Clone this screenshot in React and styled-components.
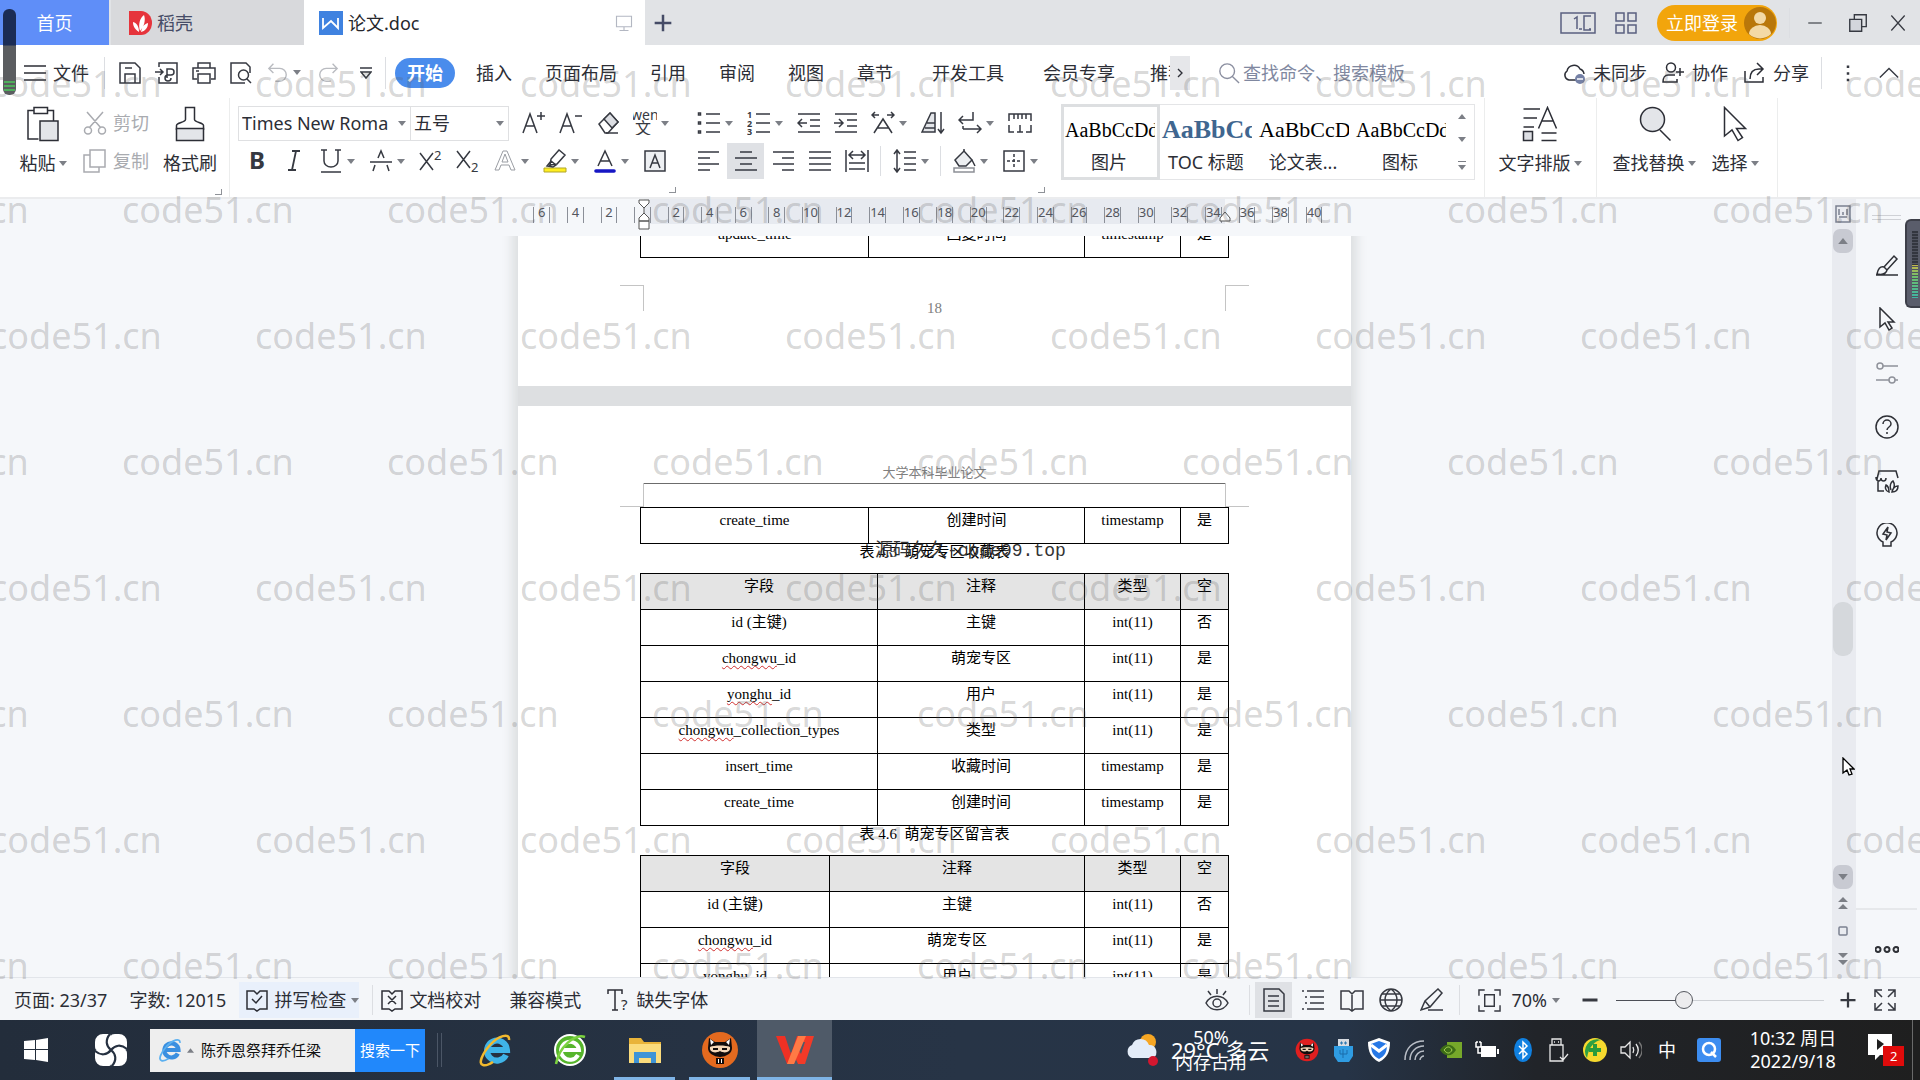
import React, { useState } from 'react';
import styled, { createGlobalStyle, css } from 'styled-components';

const GlobalStyle = createGlobalStyle`
  * {
    box-sizing: border-box;
  }

  body {
    margin: 0;
    color: #2c2e36;
    font-family: 'Noto Sans', 'Noto Sans CJK SC', sans-serif;
    font-size: 18px;
    line-height: 24px;
    overflow: hidden;
  }

  button, input, select {
    font: inherit;
    color: inherit;
    border: none;
    background: none;
    padding: 0;
    margin: 0;
    outline: none;
  }

  table {
    border-collapse: collapse;
  }
`;

/* ---------- icons ---------- */

const Svg = styled.svg`
  flex: none;
  display: block;
  fill: none;
  stroke: currentColor;
  stroke-width: ${(p) => p.$weight || 1.5};

  text {
    fill: currentColor;
    stroke: none;
  }
`;

const CaretSvg = styled.svg`
  flex: none;
  display: block;
  fill: #7c7f86;
`;

const glyphs = {
  menu: <path d="M1 5h22M1 12h22M1 19h22" />,
  save: <path d="M2 2h15l5 5v15H2zM7 22v-9h10v9M7 7h7" />,
  exportPdf: <path d="M4 6V2h18v20H4v-6M0 11h8M5 8l3 3-3 3M12 17v-9h4a3 3 0 010 6h-3a3 3 0 103 3" />,
  print: <path d="M6 7V2h12v5M5 18H1V7h22v11h-4M6 13h12v9H6zM4 10h3" />,
  preview: <path d="M16 22H2V2h15l4 4v6M14.500 9a5 5 0 100 10 5 5 0 000-10zM18 18l4 4" />,
  undo: <path d="M7 2L2 7l5 5M2 7h12a7 7 0 010 14H9" />,
  redo: <path d="M17 2l5 5-5 5M22 7H10a7 7 0 000 14h5" />,
  search: <path d="M10 2a8 8 0 100 16 8 8 0 000-16zM16 16l7 7" />,
  monitor: <path d="M2 3h20v14H2zM12 17v5M6 22h12" />,
  plus: <path d="M12 2v20M2 12h20" strokeWidth="3" />,
  minus: <path d="M2 12h20" strokeWidth="4" />,
  grid: <path d="M2 2h8v8H2zM14 2h8v8h-8zM2 14h8v8H2zM14 14h8v8h-8z" />,
  minimize: <path d="M3 12h18" />,
  restore: <><path d="M8 8V3h13v13h-5" /><path d="M3 8h13v13H3z" fill="#d3d6dc" /></>,
  close: <path d="M4 3l16 18M20 3L4 21" />,
  cloud: <><path d="M14 19H7a5 5 0 01-2-9 7 7 0 0113-2 6 6 0 014 5" /><circle cx="18" cy="18" r="5" fill="#7581a6" stroke="none" /><path d="M15 18h6" stroke="#fff" /></>,
  collab: <path d="M10 2a4 4 0 100 9 4 4 0 000-9zM14 14H7c-3 0-5 3-5 7h14v-3M15 11h8M19 7v8" />,
  share: <path d="M3 10v11h18v-5M15 2l6 6-6 6M21 8h-4c-6 0-9 4-9 10" />,
  more: <path d="M12 3v3M12 11v3M12 19v3" strokeWidth="3" />,
  up: <path d="M2 17l10-10 10 10" />,
  right: <path d="M9 6l6 6-6 6" strokeWidth="2" />,
  paste: <><path d="M9 22H2V3h4M15 3h4v7M6 1h9v4H6z" /><path d="M10 10h12v13H10z" fill="#e3e5e9" /></>,
  cut: <path d="M4 1l14 16M20 1L6 17M5 16a3.500 3.500 0 100 7 3.500 3.500 0 000-7zM19 16a3.500 3.500 0 100 7 3.500 3.500 0 000-7z" />,
  copy: <path d="M7 1h15v17H7zM7 6H1v17h15v-5" />,
  brush: <><path d="M3 16v-3c0-2 6-2 6-4V1h6v8c0 2 6 2 6 4v3" /><path d="M3 15h18v8H3z" fill="#e3e5e9" /></>,
  fontUp: <path d="M1 22L8 3l7 19M4 15h9M15 5h8M19 1v8" />,
  fontDown: <path d="M1 22L8 3l7 19M4 15h9M16 5h7" />,
  eraser: <><path d="M3 13L14 2l8 9-10 11H9z" /><path d="M8 8l6-6 8 9-6 6z" fill="#dcdee3" /><path d="M10 22h12" /></>,
  pinyin: <><text x="-2" y="9" fontSize="14">wén</text><text x="2" y="23" fontSize="16">文</text></>,
  bold: <text x="4" y="20" fontSize="24" fontWeight="700">B</text>,
  italic: <path d="M10 2h8M6 21h8M14 2L10 21" strokeWidth="1.8" />,
  underline: <path d="M5 1v11a7 6 0 0014 0V1M2 1h6M16 1h6M2 23h20" />,
  strike: <path d="M4 22l2-6M9 9l3-7 3 7M18 16l2 6M1 13h22" />,
  sup: <><path d="M1 4l13 17M14 4L1 21" /><text x="15" y="11" fontSize="13">2</text></>,
  sub: <><path d="M1 2l13 17M14 2L1 19" /><text x="15" y="23" fontSize="13">2</text></>,
  effect: <path d="M2 21L10 2h4l8 19h-4l-2-5H8l-2 5zM9 13h6l-3-8z" stroke="#9a9da3" strokeWidth="1" />,
  highlight: <><path d="M1 19h22v4H1z" fill="#ffee20" stroke="#b0a52a" strokeWidth="1" /><path d="M7 16l1-6 8-9 6 5-8 9zM4 17l4-5 5 4-3 2z" /></>,
  fontColor: <><path d="M5 17l7-15 7 15M7 12h10" /><path d="M3 22h18" stroke="#1616c4" strokeWidth="3.600" strokeLinecap="round" /></>,
  charBorder: <><path d="M2 2h20v20H2z" fill="#eef0f3" /><path d="M7 19l5-13 5 13M9 14h6" /></>,
  bullets: <path d="M9 3h14M9 12h14M9 21h14M1.500 2h2v2h-2zM1.500 11h2v2h-2zM1.500 20h2v2h-2z" />,
  numbers: <><path d="M9 3h14M9 12h14M9 21h14" /><text x="0" y="7" fontSize="9" fontWeight="700">1</text><text x="0" y="16" fontSize="9" fontWeight="700">2</text><text x="0" y="24" fontSize="9" fontWeight="700">3</text></>,
  outdent: <path d="M1 3h22M13 9h10M13 15h10M1 21h22M1 12h9M5 8l-4 4 4 4" />,
  indent: <path d="M1 3h22M13 9h10M13 15h10M1 21h22M0 12h9M5 8l4 4-4 4" />,
  charScale: <path d="M3 22L12 8l9 14M6 17h12M1 4h7M16 4h7M4 1L1 4l3 3M20 1l3 3-3 3" />,
  sort: <><path d="M1 21L10 2h4v19zM6 12h8M4 17h10" fill="#e3e5e9" /><path d="M20 1v20M17 18l3 4 3-4" /></>,
  wrap: <path d="M15 1v8H2M5 5L1 9l4 4M5 18h17M19 14l4 4-4 4M5 18v-3" />,
  tabRuler: <path d="M1 10V3h22v7M6 3v5M10 3v5M14 3v5M18 3v5M1 14v7h5M23 14v7h-5M12 14v7M9 21h6" />,
  alignLeft: <path d="M1 3h21M1 9h12M1 15h21M1 21h12" />,
  alignCenter: <path d="M6 3h12M1 9h22M6 15h12M1 21h22" />,
  alignRight: <path d="M2 3h21M11 9h12M2 15h21M11 21h12" />,
  justify: <path d="M1 3h22M1 9h22M1 15h22M1 21h22" />,
  distribute: <path d="M1 1v22M23 1v22M5 6h14M8 2L4 6l4 4M16 2l4 4-4 4M4 14h16M4 20h16" />,
  spacing: <path d="M4 2v20M1 5l3-4 3 4M1 19l3 4 3-4M11 3h12M11 9h12M11 15h12M11 21h12" />,
  shading: <><path d="M3 11L12 2l8 9-6 6H7z" fill="#eceef1" /><path d="M12 2V0M20 11l3 6" /><path d="M2 19h20v4H2z" stroke="#8d9096" /></>,
  borders: <><path d="M2 2h20v20H2z" /><path d="M12 5v14M5 12h14" strokeDasharray="3 2" /></>,
  layout: <><path d="M1 2h11M1 8h9M1 14h7M13 18h10M13 23h10" /><path d="M11 15l6-14 6 14M13 10h8" /><path d="M1 17h6v6H1z" fill="#dcdee3" /></>,
  find: <><circle cx="11" cy="9" r="8" fill="#e3e5e9" /><path d="M16 16l7 7" /></>,
  pointer: <path d="M5 1v19l5-4 4 7 3-2-4-6h6z" />,
  pen: <path d="M1 22h22M9 14l10-11 3 3-10 11zM9 14c-4-1-6 2-7 7 5 1 9 0 10-4" />,
  sliders: <path d="M8 5h15M1 19h13M5 2a3 3 0 100 6 3 3 0 000-6zM17 16a3 3 0 100 6 3 3 0 000-6zM20 19h3" />,
  help: <><circle cx="12" cy="12" r="11" /><path d="M8 9a4 4 0 118 0c0 3-4 3-4 6M12 17v2" /></>,
  shop: <path d="M2 10L4 2h17l2 7M1 8c0 5 5 5 5 1 0 4 5 4 5 0M3 12v10h6M14 23c-4-1-4-5-3-7 2 1 3 3 3 7zM16 21c-2-4 0-8 2-9 2 3 2 6-1 10M17 23c1-4 3-6 6-6 0 4-2 6-6 6z" />,
  bulb: <path d="M8 23v-4a10 10 0 118 0v4zM13 4l-5 7 4 1-1 5 5-7-4-1z" />,
  dots: <path d="M3 9a2.500 2.500 0 100 5 2.500 2.500 0 000-5zM12 9a2.500 2.500 0 100 5 2.500 2.500 0 000-5zM21 9a2.500 2.500 0 100 5 2.500 2.500 0 000-5z" strokeWidth="2" />,
  spell: <path d="M9 3H2v18h7l3 2 3-2h7V3h-7l-3 3zM7 11l4 4 6-7" />,
  proof: <path d="M9 3H2v18h7l3 2 3-2h7V3h-7l-3 3zM8 8l8 8M16 8l-8 8" />,
  missing: <><path d="M1 6V2h14v4M8 2v20M5 22h6" /><text x="14" y="22" fontSize="15">?</text></>,
  eye: <path d="M1 15c5-9 17-9 22 0-5 9-17 9-22 0zM12 11a4 4 0 100 8 4 4 0 000-8zM12 6V1M6 7L3 3M18 7l3-4" />,
  pageView: <path d="M2 1h15l5 5v17H2zM6 8h11M6 13h11M6 18h11" />,
  outline: <path d="M6 3h17M9 9h14M9 15h14M6 21h17M1 3h2M4 9h2M4 15h2M1 21h2" />,
  book: <path d="M9 3H1v18h8l3 2 3-2h8V3h-8l-3 3zM12 5v17" />,
  globe: <path d="M12 1a11 11 0 100 22 11 11 0 000-22zM1 12h22M12 1c-8 6-8 16 0 22M12 1c8 6 8 16 0 22M3 6h18M3 18h18" />,
  edit: <path d="M1 22l4-9L18 1l4 4L10 19zM5 13l5 6M8 22h15" />,
  fit: <path d="M1 7V1h6M17 1h6v6M23 17v6h-6M7 23H1v-6M7 6h10v12H7z" />,
  full: <path d="M2 9V2h7M2 2l7 7M15 2h7v7M22 2l-7 7M2 15v7h7M2 22l7-7M22 15v7h-7M22 22l-7-7" />,
};

const Icon = ({ name, size = 24 }) => (
  <Svg width={size} height={size} viewBox="0 0 24 24" $weight={size > 30 ? 1 : 1.5} aria-hidden="true">
    {glyphs[name]}
  </Svg>
);

const Caret = () => (
  <CaretSvg width="8" height="5" viewBox="0 0 8 5" aria-hidden="true">
    <path d="M0 0h8L4 5z" />
  </CaretSvg>
);

/* ---------- title bar ---------- */

const Window = styled.div`
  position: relative;
  display: flex;
  flex-direction: column;
  height: 100vh;
  overflow: hidden;
  background: #f5f7fa;
`;

const TitleBar = styled.header`
  display: flex;
  align-items: center;
  height: 45px;
  flex: none;
  background: #e1e3e6;
  color: #454b66;
`;

const HomeTab = styled.button`
  width: 109px;
  height: 100%;
  margin-right: 2px;
  background: #5f8ef8;
  color: #fff;
`;

const DocTab = styled.button`
  display: flex;
  align-items: center;
  gap: 5px;
  width: ${(p) => (p.$active ? 341 : 193)}px;
  height: 100%;
  padding: 0 12px 0 ${(p) => (p.$active ? 15 : 18)}px;
  background: ${(p) => (p.$active ? '#fff' : '#d8d9dc')};
  color: ${(p) => (p.$active ? '#26272c' : '#454b66')};

  > span {
    flex: 1;
    text-align: left;
  }
`;

const MonitorSlot = styled.i`
  color: #b3b7c2;
`;

const IconButton = styled.button`
  display: flex;
  align-items: center;
  justify-content: center;
  flex: none;
  width: ${(p) => p.$w || 37}px;
  height: 36px;
  color: ${(p) => p.$color || '#363941'};
  background: ${(p) => (p.$on ? '#dfe1e5' : 'none')};
  gap: 4px;
`;

const WindowControls = styled.div`
  display: flex;
  align-items: center;
  margin-left: auto;
`;

const LoginButton = styled.button`
  display: flex;
  align-items: center;
  justify-content: space-between;
  width: 120px;
  height: 36px;
  margin: 0 12px 0 8px;
  padding: 0 1px 0 9px;
  border-radius: 18px;
  background: #f2a50c;
  color: #fff;
`;

const Divider = styled.i`
  flex: none;
  width: 1px;
  height: ${(p) => p.$h || 30}px;
  margin: 0 ${(p) => p.$gap || 0}px;
  background: #dcdee2;
`;

/* ---------- menu row ---------- */

const MenuBar = styled.nav`
  display: flex;
  align-items: center;
  flex: none;
  height: 53px;
  padding: 2px 9px 0 20px;
  background: #fff;
`;

const FileButton = styled.button`
  display: flex;
  align-items: center;
  gap: 6px;
  margin-right: 15px;
  padding-left: 3px;
`;

const QuickAccess = styled.div`
  display: flex;
  align-items: center;
  padding-left: 6px;
`;

const MenuTab = styled.button`
  flex: none;
  padding: 0 16px 0 17px;
  margin: 0 ${(p) => (p.$wide ? 6 : 0)}px;
  white-space: nowrap;

  ${(p) => p.$active && css`
    height: 30px;
    padding: 0 12px;
    margin: 0 4px 0 9px;
    border-radius: 15px;
    background: #4a8cec;
    color: #fff;
    font-weight: 700;
  `}
`;

const CutTab = styled.button`
  width: 20px;
  padding-left: 0;
  margin-left: 19px;
  overflow: hidden;
  white-space: nowrap;
  text-align: left;
`;

const ScrollTabs = styled.button`
  display: flex;
  align-items: center;
  justify-content: center;
  width: 20px;
  height: 34px;
  background: #e6e7ea;
`;

const CommandSearch = styled.label`
  display: flex;
  align-items: center;
  flex: 1;
  gap: 3px;
  margin-left: 28px;
  color: #8b8fa0;

  input {
    width: 200px;
  }

  input::placeholder {
    color: #8088a0;
    opacity: 1;
  }
`;

const ActionButton = styled.button`
  display: flex;
  align-items: center;
  gap: 7px;
  margin-right: ${(p) => p.$end || 14}px;
  white-space: nowrap;
`;

/* ---------- ribbon ---------- */

const Ribbon = styled.section`
  display: flex;
  flex: none;
  height: 101px;
  background: #fff;
  border-bottom: 2px solid #ebecee;
`;

const Group = styled.div`
  display: flex;
  flex-direction: column;
  flex: none;
  padding: 7px ${(p) => p.$right || 7}px 0 ${(p) => p.$left || 8}px;
  border-right: ${(p) => (p.$plain ? 'none' : '1px solid #eceded')};
`;

const GroupBody = styled.div`
  display: flex;
  gap: 9px;
`;

const Rows = styled.div`
  display: flex;
  flex-direction: column;
  gap: 2px;
`;

const Row = styled.div`
  display: flex;
  align-items: center;
  height: 36px;
`;

const Corner = styled.i`
  align-self: flex-end;
  width: 7px;
  height: 6px;
  margin-top: 8px;
  border: solid #8f9298;
  border-width: 0 1px 1px 0;
`;

const BigTool = styled.button`
  display: flex;
  flex-direction: column;
  align-items: center;
  justify-content: space-between;
  width: ${(p) => p.$w}px;
  height: 76px;
  padding-top: 1px;

  > span {
    display: flex;
    align-items: center;
    gap: 3px;
    height: 36px;
    white-space: nowrap;
  }
`;

const SmallTool = styled.button`
  display: flex;
  align-items: center;
  gap: 6px;
  height: 36px;
  color: #a9abb0;
`;

const FontBoxes = styled.div`
  display: flex;
  width: 271px;
  height: 35px;
  margin-right: 6px;
  border: 1px solid #dfe0e2;
`;

const SelectBox = styled.label`
  display: flex;
  align-items: center;
  gap: 9px;
  width: ${(p) => p.$w}px;
  padding: 0 4px 0 3px;
  border-left: ${(p) => (p.$split ? '1px solid #dfe0e2' : 'none')};

  select {
    flex: 1;
    min-width: 0;
    appearance: none;
    text-overflow: clip;
    overflow: hidden;
  }
`;

const Gallery = styled.div`
  display: flex;
  height: 76px;
  margin-top: -1px;
  border: 1px solid #e4e5e7;
`;

const StyleCard = styled.button`
  display: flex;
  flex-direction: column;
  width: 97px;
  height: 74px;
  padding: 0 4px 0 1px;
  outline: ${(p) => (p.$on ? '3px solid #dddfe1' : 'none')};
  outline-offset: -2px;

  > b {
    width: 100%;
    height: 36px;
    padding-left: 2px;
    margin-top: 7px;
    overflow: hidden;
    color: ${(p) => (p.$title ? '#40668f' : '#000')};
    font-family: 'Liberation Serif', serif;
    font-size: ${(p) => p.$size}px;
    font-weight: ${(p) => (p.$title ? 700 : 400)};
    line-height: 36px;
    text-align: left;
    white-space: nowrap;
  }

  > span {
    width: 100%;
    line-height: 28px;
    text-align: center;
  }
`;

const GalleryScroll = styled.div`
  display: flex;
  flex-direction: column;
  align-items: center;
  justify-content: space-around;
  width: 24px;
`;

/* ---------- document ---------- */

const Workspace = styled.main`
  display: flex;
  flex: 1;
  min-height: 0;
`;

const Editor = styled.div`
  display: flex;
  flex-direction: column;
  align-items: center;
  flex: 1;
  min-width: 0;
  padding-left: 37px;
`;

const Ruler = styled.div`
  position: relative;
  flex: none;
  width: 833px;
  height: 37px;
  padding: 0 20px 0 7px;
`;

const RulerScale = styled.div`
  display: flex;
  align-items: flex-start;
  height: 25px;
  padding-top: 8px;
  background: linear-gradient(90deg, transparent 119px, #e7eaf0 119px, #e7eaf0 700px, transparent 700px);
`;

const RulerMark = styled.div`
  display: flex;
  justify-content: center;
  flex: 1;
  min-width: 0;

  span {
    width: 50%;
    display: flex;
    justify-content: center;
    height: 16px;
    border: solid #8b8f98;
    border-width: 0 1px;
    color: #53565e;
    font-size: 13px;
    line-height: 10px;
  }
`;

const IndentMarker = styled.svg`
  position: absolute;
  top: 0;
  left: ${(p) => p.$left}px;
  fill: #fff;
  stroke: #555;
`;

const Viewport = styled.div`
  flex: 1;
  min-height: 0;
  overflow: hidden;
  padding: 0 20px;
`;

const Sheets = styled.div`
  display: flex;
  flex-direction: column;
  gap: 20px;
  margin-top: -15px;
  background: #dddfe1;
  box-shadow: 0 0 10px 6px #dddfe1;
`;

const Sheet = styled.article`
  position: relative;
  display: flex;
  flex-direction: column;
  align-items: center;
  width: 833px;
  padding-top: ${(p) => p.$top}px;
  padding-bottom: ${(p) => p.$bottom}px;
  background: #fff;
  color: #000;
  font-family: 'Liberation Serif', 'Noto Sans CJK SC', serif;
  font-size: 15px;
`;

const Margins = styled.div`
  display: flex;
  color: #808080;
`;

const CropMark = styled.i`
  width: 24px;
  height: ${(p) => (p.$foot ? 26 : 24)}px;
  border: 0 solid #c4c4c4;
  border-top-width: ${(p) => (p.$foot ? 1 : 0)}px;
  border-bottom-width: ${(p) => (p.$foot ? 0 : 1)}px;
  border-${(p) => (p.$side === 'left' ? 'right' : 'left')}-width: 1px;
`;

const FooterText = styled.div`
  width: 581px;
  padding-top: 13px;
  line-height: 20px;
  text-align: center;
`;

const HeaderText = styled.div`
  font-size: 13px;
  line-height: 20px;
  color: #808080;
`;

const HeaderRule = styled.div`
  width: 581px;
  border-top: 1px solid #6c6c6c;
`;

const DataTable = styled.table`
  width: 589px;
  table-layout: fixed;
  margin-bottom: ${(p) => p.$gap || 0}px;

  th, td {
    height: 36px;
    padding: 0;
    border: 1px solid #000;
    font-weight: 400;
    line-height: 25px;
    text-align: center;
    vertical-align: top;
  }

  th {
    background: #e4e4e4;
  }

  u {
    text-decoration: underline wavy #d03030 1px;
    text-underline-offset: 2px;
    text-decoration-skip-ink: none;
  }
`;

const TableTitle = styled.p`
  height: 29px;
  margin: 0;
  line-height: 16px;
  white-space: pre;
`;

const SiteStamp = styled.span`
  position: absolute;
  top: 135px;
  left: 357px;
  color: #333;
  font: 18px/20px 'Liberation Mono', 'Noto Sans CJK SC', monospace;
  white-space: nowrap;
`;

const ScrollRail = styled.aside`
  display: flex;
  flex-direction: column;
  align-items: center;
  width: 24px;
  padding: 6px 3px 4px 0;
  background: #e9ebf0;
  color: #7b8190;

  > svg {
    margin-bottom: 6px;
  }
`;

const RailButton = styled.button`
  display: flex;
  align-items: center;
  justify-content: center;
  flex: none;
  width: 20px;
  height: 24px;
  margin: ${(p) => (p.$solid ? '0' : '2px')} 0;
  border-radius: 7px;
  background: ${(p) => (p.$solid ? '#c8cad2' : 'none')};
`;

const RailTrack = styled.div`
  flex: 1;
  display: flex;
  flex-direction: column;
  width: 20px;

  &::before {
    content: '';
    flex: 350;
  }

  &::after {
    content: '';
    flex: 210;
  }

  i {
    height: 54px;
    border-radius: 9px;
    background: #d5d8dc;
  }
`;

const SideBar = styled.aside`
  display: flex;
  flex-direction: column;
  align-items: center;
  width: 64px;
  padding: 16px 3px 9px 0;

  > hr {
    width: 100%;
    margin: auto 0 22px;
    border: none;
    border-top: 2px solid #e6e8eb;
  }
`;

const DragHandle = styled.i`
  width: 29px;
  height: 5px;
  margin-bottom: 18px;
  border: solid #cfd1d6;
  border-width: 1px 0;
`;

const SideButton = styled.button`
  display: flex;
  align-items: center;
  justify-content: center;
  width: 40px;
  height: 54px;
  color: ${(p) => (p.$soft ? '#8f929a' : '#2e3036')};

  &:last-child {
    height: 36px;
  }
`;

/* ---------- status bar ---------- */

const StatusBar = styled.footer`
  display: flex;
  align-items: center;
  flex: none;
  height: 43px;
  padding: 2px 11px 0 14px;
  border-top: 1px solid #e2e5ea;
  background: #f4f6f9;
  white-space: nowrap;
`;

const StatusItem = styled.button`
  display: flex;
  align-items: center;
  flex: none;
  gap: 5px;
  height: 36px;
  margin-right: ${(p) => p.$end || 13}px;
  padding-left: ${(p) => (p.$on ? 6 : 0)}px;
  background: ${(p) => (p.$on ? '#e9f0fb' : 'none')};
`;

const StatusRight = styled.div`
  display: flex;
  align-items: center;
  margin-left: auto;
`;

const ZoomSlider = styled.input`
  appearance: none;
  width: 208px;
  height: 20px;
  margin: 0 12px 0 14px;
  background: linear-gradient(90deg, #4c4f57 32%, #cdd0d5 32%) center / 100% 1px no-repeat;

  &::-webkit-slider-thumb {
    appearance: none;
    width: 18px;
    height: 18px;
    border: 1px solid #55585f;
    border-radius: 50%;
    background: #ececee;
  }
`;

/* ---------- task bar ---------- */

const TaskBar = styled.footer`
  display: flex;
  align-items: center;
  flex: none;
  height: 60px;
  background: linear-gradient(90deg, #232d3b, #273446 50%, #263447 70%, #212429 80%, #1f1f1f);
  color: #fff;
`;

const TaskButton = styled.button`
  display: flex;
  align-items: center;
  justify-content: center;
  flex: none;
  width: ${(p) => p.$w || 75}px;
  height: 60px;
  background: ${(p) => (p.$active ? '#4f5a68' : 'none')};
`;

const AppMark = styled.span`
  display: flex;
  align-items: center;
  justify-content: center;
  width: ${(p) => (p.$full ? 75 : 61)}px;
  height: 60px;
  padding-top: 3px;
  border-bottom: 3px solid ${(p) => (p.$open ? '#7fb4e6' : 'transparent')};
`;

const TaskSearch = styled.form`
  display: flex;
  width: 275px;
  height: 43px;
  background: #eee;
  color: #111;
  font-size: 15px;

  label {
    display: flex;
    align-items: center;
    flex: 1;
    gap: 5px;
    min-width: 0;
    padding-left: 8px;
  }

  input {
    flex: 1;
    min-width: 0;
    padding-left: 2px;
  }

  button {
    width: 70px;
    background: #2188fb;
    color: #fff;
  }
`;

const Grip = styled.i`
  width: 5px;
  height: 34px;
  margin: 0 15px 0 12px;
  border: solid #4b5666;
  border-width: 0 1px;
`;

const Weather = styled.div`
  display: flex;
  align-items: center;
  gap: 12px;
  margin: 0 17px 0 auto;
`;

const WeatherText = styled.div`
  display: grid;
  align-items: center;
  width: 101px;
  white-space: nowrap;

  > * {
    grid-area: 1 / 1;
  }

  strong {
    font-size: 22px;
    font-weight: 400;
  }

  span {
    width: 80px;
    line-height: 25px;
    text-align: center;
  }
`;

const Clock = styled.button`
  width: 120px;
  margin-right: 7px;
  line-height: 23px;
`;

const ShowDesktop = styled.button`
  width: 8px;
  height: 60px;
  border-left: 1px solid #6a6a6a;
`;

/* ---------- things floating over the window ---------- */

const Watermark = styled.div`
  position: absolute;
  inset: 21px 0 0;
  overflow: hidden;
  pointer-events: none;
  color: rgba(90, 90, 90, 0.24);
  font-size: 36px;
`;

const WatermarkRow = styled.div`
  display: flex;
  height: 126px;
  line-height: 126px;
  margin-left: ${(p) => (p.$shift ? -143 : -10)}px;

  span {
    flex: 0 0 265px;
  }
`;

const LevelMeter = styled.div`
  position: absolute;
  top: 9px;
  left: 3px;
  width: 13px;
  height: 86px;
  border-radius: 6px;
  background:
    repeating-linear-gradient(#4fae5c 0 2px, transparent 2px 4px) 1px 72px / 11px 12px no-repeat,
    linear-gradient(#1b2c55 36px, #5b5d60 37px);
`;

const SystemGadget = styled.div`
  position: absolute;
  top: 219px;
  right: 0;
  width: 15px;
  height: 89px;
  padding: 10px 2px 8px 5px;
  border: 2px solid #3d3f49;
  border-right: none;
  border-radius: 6px 0 0 6px;
  background: #5a5d6b;

  i {
    display: block;
    width: 6px;
    height: 100%;
    background:
      repeating-linear-gradient(transparent 0 2px, #50535f 2px 3px),
      linear-gradient(#33363f 34px, #c5b84a 34px, #6dbf6d 46px, #3fb5a4 100%);
  }
`;

const Cursor = styled.svg`
  position: absolute;
  top: 757px;
  right: 65px;
`;

const menuTabs = ['插入', '页面布局', '引用', '审阅', '视图', '章节', '开发工具', '会员专享'];

const fontTools = [['bold'], ['italic'], ['underline', 1], ['strike', 1], ['sup'], ['sub'], ['effect', 1], ['highlight', 1], ['fontColor', 1], ['charBorder']];
const listTools = [['bullets', 1], ['numbers', 1], ['outdent'], ['indent'], ['charScale', 1], ['sort'], ['wrap', 1], ['tabRuler']];
const alignTools = [['alignLeft'], ['alignCenter'], ['alignRight'], ['justify'], ['distribute']];

const rulerNumbers = ['6', '4', '2', ''].concat(Array.from({ length: 20 }, (_, i) => String(i * 2 + 2)));

const heads = ['字段', '注释', '类型', '空'];

const collectRows = [
  ['id (主键)', '主键', 'int(11)', '否'],
  ['chongwu|_id', '萌宠专区', 'int(11)', '是'],
  ['yonghu|_id', '用户', 'int(11)', '是'],
  ['chongwu|_collection_types', '类型', 'int(11)', '是'],
  ['insert_time', '收藏时间', 'timestamp', '是'],
  ['create_time', '创建时间', 'timestamp', '是'],
];

const messageRows = [
  ['id (主键)', '主键', 'int(11)', '否'],
  ['chongwu|_id', '萌宠专区', 'int(11)', '是'],
  ['yonghu|_id', '用户', 'int(11)', '是'],
];

// "word|rest" puts the spelling squiggle under the part before the bar
const FieldName = ({ value }) => {
  const [word, rest] = value.split('|');
  return rest ? <><u>{word}</u>{rest}</> : value;
};

const FieldTable = ({ cols, head, rows, gap }) => (
  <DataTable $gap={gap}>
    <colgroup>
      {cols.map((w, i) => <col key={i} width={w} />)}
    </colgroup>
    {head && (
      <thead>
        <tr>{heads.map((h) => <th key={h} scope="col">{h}</th>)}</tr>
      </thead>
    )}
    <tbody>
      {rows.map((row) => (
        <tr key={row[0]}>
          {row.map((cell, i) => <td key={i}><FieldName value={cell} /></td>)}
        </tr>
      ))}
    </tbody>
  </DataTable>
);

const Tools = ({ items, active, onPick }) => items.map(([name, caret]) => (
  <IconButton
    key={name}
    $w={caret ? 50 : 37}
    $on={active === name}
    aria-label={name}
    onClick={() => onPick && onPick(name)}
  >
    <Icon name={name} />
    {caret && <Caret />}
  </IconButton>
));

const Margin = ({ foot, children }) => (
  <Margins>
    <CropMark $side="left" $foot={foot} />
    {children}
    <CropMark $side="right" $foot={foot} />
  </Margins>
);

/* ---------- coloured logos ---------- */

const DocerLogo = () => (
  <svg width="23" height="24" viewBox="0 0 23 24">
    <path d="M0 0h12a11 12 0 010 24H0z" fill="#e6343c" />
    <path d="M10 21C5 18 4 14 4 11c4 1 6 5 6 10zM11 20c-2-7 0-13 4-16 2 5 0 12-4 16zM12 21c1-5 3-8 7-9 0 5-3 8-7 9z" fill="#fff" />
  </svg>
);

const WriterLogo = () => (
  <svg width="24" height="24" viewBox="0 0 24 24">
    <path d="M0 0h24v24H0z" fill="#3f82e0" />
    <path d="M4 7v10l8-7 7 7V7" fill="none" stroke="#fff" strokeWidth="1.800" />
  </svg>
);

const IeLogo = ({ size = 34, color = '#3fb4e8', ring = '#f2b92e' }) => (
  <svg width={size} height={size} viewBox="0 0 34 34" fill="none">
    <path d="M28 22a10 10 0 11 1-5H10" stroke={color} strokeWidth="6" />
    <path d="M31 7c1-8-11-4-19 5C4 21 0 31 5 32c3 1 7-1 10-3" stroke={ring} strokeWidth="2.500" />
  </svg>
);

const GreenLogo = () => (
  <svg width="34" height="34" viewBox="0 0 34 34" fill="none">
    <circle cx="17" cy="17" r="15" fill="#56b52c" stroke="#fff" strokeWidth="2" />
    <path d="M25 22a9 9 0 11 1-5H10" stroke="#fff" strokeWidth="4" />
    <path d="M32 4C22 0 6 14 3 31" stroke="#7cd33f" strokeWidth="2.500" />
  </svg>
);

const FolderLogo = () => (
  <svg width="34" height="30" viewBox="0 0 34 30">
    <path d="M1 3h12l3 4h17v20H1z" fill="#e9b43a" />
    <path d="M1 9h32v19H1z" fill="#fbdc7c" />
    <path d="M6 17h22v11h-5v-5H11v5H6z" fill="#3f94d6" />
  </svg>
);

const NinjaLogo = ({ size = 38, body = '#e46a1f' }) => (
  <svg width={size} height={size} viewBox="0 0 38 38">
    <circle cx="19" cy="19" r="18" fill={body} />
    <path d="M8 7l6 4h10l6-4 1 10a12 9 0 01-24 0z" fill="#120d0c" />
    <path d="M9 8l4 3-3 3zM29 8l-4 3 3 3z" fill="#fff" />
    <path d="M9 16c4-2 16-2 20 0 1 5-5 7-10 4-5 3-11 1-10-4z" fill="#f4d8b8" />
    <path d="M12 17h5v2h-5zM21 17h5v2h-5zM15 27h8v6h-8z" fill="#120d0c" />
    <path d="M17 28h1v4h-1zM20 28h1v4h-1z" fill="#fff" />
  </svg>
);

const WpsLogo = () => (
  <svg width="38" height="28" viewBox="0 0 38 28">
    <path d="M0 0h9l6 18 6-18h8L18 28h-7z" fill="#ee3124" />
    <path d="M25 0h13l-9 28h-7l-4-9 3-8 4 7 4-12h-5z" fill="#f23a28" />
    <path d="M22 0h8L18 28h-7z" fill="#ff7a45" />
  </svg>
);

const PinwheelLogo = () => (
  <svg width="34" height="34" viewBox="0 0 34 34">
    <path d="M9 1h5q3 0 3 2 0-2 4-2h4a8 8 0 018 8v4q0 4-2 4 2 0 2 4v4a8 8 0 01-8 8h-4q-4 0-4-2 0 2-3 2H9a8 8 0 01-8-8v-4q0-4 2-4-2 0-2-4V9a8 8 0 018-8z" fill="#fff" />
    <path d="M17 17c-5-4-6-10-1-16M17 17c4-5 10-6 16-1M17 17c5 4 6 10 1 16M17 17c-4 5-10 6-16 1" fill="none" stroke="#263141" strokeWidth="2.200" />
  </svg>
);

const WindowsLogo = () => (
  <svg width="24" height="24" viewBox="0 0 24 24" fill="#fff">
    <path d="M0 3l11-1v9H0zM12 2l12-2v11H12zM0 12h11v10L0 21zM12 12h12v12l-12-2z" />
  </svg>
);

const WeatherLogo = () => (
  <svg width="34" height="34" viewBox="0 0 34 34">
    <circle cx="23" cy="9" r="8" fill="#f6a623" />
    <path d="M7 25a7 7 0 010-13 9 9 0 0117 0 7 7 0 014 13z" fill="#e3ecf8" />
    <circle cx="28" cy="28" r="5" fill="#d3172f" />
  </svg>
);

const trayIcons = [
  ['安全助手', <NinjaLogo size={24} body="#e01f1f" />],
  ['U盘', <svg width="22" height="24" viewBox="0 0 22 24"><path d="M6 1h11v8H6z" fill="#d7dbe0" /><path d="M2 8h19v10l-4 6H6l-4-6z" fill="#2f9ce2" /><path d="M9 4h1v2H9zM13 4h1v2h-1zM8 12v4h7v-4M11 11v9" fill="none" stroke="#1a6dab" /></svg>],
  ['电脑管家', <svg width="24" height="24" viewBox="0 0 24 24"><path d="M12 0l11 4c0 10-3 16-11 20C4 20 1 14 1 4z" fill="#fff" /><path d="M12 3l8 3c0 8-2 12-8 15-6-3-8-7-8-15z" fill="#2678e6" /><path d="M4 7l8 6 8-6" fill="none" stroke="#fff" strokeWidth="3" /></svg>],
  ['网络', <svg width="22" height="22" viewBox="0 0 22 22" fill="none" stroke="#b9bec6" strokeWidth="1.500"><path d="M1 21C1 9 9 2 20 2M6 21c0-8 6-14 14-14M11 21c0-5 4-9 9-9M16 21c0-2 2-4 4-4" /></svg>],
  ['显卡', <svg width="22" height="18" viewBox="0 0 22 18"><path d="M7 1h15v16H7z" fill="#76a82a" /><path d="M0 9c4-7 12-7 16 0-4 7-12 7-16 0z" fill="#3d6d16" /><path d="M4 9c3-4 6-4 8 0-2 4-5 4-8 0z" fill="none" stroke="#a6d452" /></svg>],
  ['电池', <svg width="24" height="18" viewBox="0 0 24 18"><path d="M6 5h15v11H6zM22 8h2v5h-2z" fill="#fff" /><path d="M1 1v5h5V1M3 6v6h3M2 0v2M5 0v2" fill="none" stroke="#fff" strokeWidth="1.500" /></svg>],
  ['蓝牙', <svg width="18" height="24" viewBox="0 0 18 24"><ellipse cx="9" cy="12" rx="9" ry="12" fill="#1080e0" /><path d="M5 8l8 8-4 4V4l4 4-8 8" fill="none" stroke="#fff" strokeWidth="1.500" /></svg>],
  ['弹出硬件', <svg width="20" height="24" viewBox="0 0 20 24" fill="none" stroke="#e8e8e8" strokeWidth="1.300"><path d="M3 7V1h9v6M1 7h13v16H1zM5 4h1M9 4h1M11 19l3 3 5-6" /></svg>],
  ['杀毒', <svg width="24" height="24" viewBox="0 0 24 24"><circle cx="12" cy="12" r="12" fill="#f6d92e" /><path d="M4 20A12 12 0 0118 2c-6 1-12 6-14 18z" fill="#2ea043" /><path d="M12 6v12M6 12h12" stroke="#2a9b3c" strokeWidth="4" /></svg>],
  ['音量', <svg width="22" height="20" viewBox="0 0 22 20" fill="none" stroke="#e8e8e8" strokeWidth="1.300"><path d="M1 7h4l5-5v16l-5-5H1zM13 7c1 2 1 4 0 6M16 4c3 4 3 8 0 12" /><path d="M19 2c4 5 4 11 0 16" stroke="#777" /></svg>],
];

const ScrollControls = () => (
  <>
    <RailButton $solid aria-label="向上滚动">
      <CaretSvg width="10" height="6" viewBox="0 0 8 5"><path d="M0 5h8L4 0z" /></CaretSvg>
    </RailButton>
    <RailTrack><i /></RailTrack>
    <RailButton $solid aria-label="向下滚动">
      <CaretSvg width="10" height="6" viewBox="0 0 8 5"><path d="M0 0h8L4 5z" /></CaretSvg>
    </RailButton>
    <RailButton aria-label="上一页">
      <CaretSvg width="10" height="12" viewBox="0 0 10 12"><path d="M0 5h10L5 0zM0 12h10L5 7z" /></CaretSvg>
    </RailButton>
    <RailButton aria-label="选择浏览对象">
      <Svg width="10" height="10" viewBox="0 0 10 10"><rect x="1" y="1" width="8" height="8" rx="1" /></Svg>
    </RailButton>
    <RailButton aria-label="下一页">
      <CaretSvg width="10" height="12" viewBox="0 0 10 12"><path d="M0 0h10L5 5zM0 7h10L5 12z" /></CaretSvg>
    </RailButton>
  </>
);

const App = () => {
  const [align, setAlign] = useState('alignCenter');
  const [zoom, setZoom] = useState(31);

  return (
    <Window>
      <GlobalStyle />

      <TitleBar>
        <HomeTab><span>首页</span></HomeTab>
        <DocTab><DocerLogo /><span>稻壳</span></DocTab>
        <DocTab $active>
          <WriterLogo />
          <span>论文.doc</span>
          <MonitorSlot><Icon name="monitor" size={18} /></MonitorSlot>
        </DocTab>
        <IconButton aria-label="新建" $w={35} $color="#454b66"><Icon name="plus" size={20} /></IconButton>
        <WindowControls>
          <IconButton $w={50} $color="#5a6080" aria-label="窗口">
            <Svg width="36" height="22" viewBox="0 0 36 22">
              <path d="M1 1h34v20H1zM14 7l3-2v12M22 17h-3M31 4h-7v14h7M29 17h2" />
            </Svg>
          </IconButton>
          <IconButton $w={46} $color="#5a6080" aria-label="应用"><Icon name="grid" /></IconButton>
          <LoginButton>
            <span>立即登录</span>
            <svg width="32" height="32" viewBox="0 0 32 32">
              <circle cx="16" cy="16" r="16" fill="#b9770a" />
              <circle cx="16" cy="11" r="6" fill="#f3d9a6" />
              <path d="M5 27a11 9 0 0122 0 16 16 0 01-22 0z" fill="#f3d9a6" />
            </svg>
          </LoginButton>
          <Divider />
          <IconButton $w={50} aria-label="最小化"><Icon name="minimize" size={18} /></IconButton>
          <IconButton $w={36} aria-label="还原"><Icon name="restore" size={22} /></IconButton>
          <IconButton $w={44} aria-label="关闭"><Icon name="close" size={20} /></IconButton>
        </WindowControls>
      </TitleBar>

      <MenuBar>
        <FileButton><Icon name="menu" />文件</FileButton>
        <Divider $h={32} />
        <QuickAccess>
          {['save', 'exportPdf', 'print', 'preview'].map((name) => (
            <IconButton key={name} aria-label={name}><Icon name={name} /></IconButton>
          ))}
          <IconButton $w={50} $color="#b9bbc0" aria-label="撤销"><Icon name="undo" size={22} /><Caret /></IconButton>
          <IconButton $w={38} $color="#b9bbc0" aria-label="恢复"><Icon name="redo" size={22} /></IconButton>
          <IconButton $w={38} aria-label="更多">
            <Svg width="12" height="14" viewBox="0 0 12 14"><path d="M0 2h12M1 6h10l-5 6z" /></Svg>
          </IconButton>
        </QuickAccess>
        <Divider $h={32} />
        <MenuTab $active>开始</MenuTab>
        {menuTabs.map((tab) => <MenuTab key={tab} $wide={tab === '开发工具'}>{tab}</MenuTab>)}
        <CutTab>推荐</CutTab>
        <ScrollTabs aria-label="更多选项卡"><Icon name="right" size={16} /></ScrollTabs>
        <CommandSearch>
          <Icon name="search" size={22} />
          <input type="text" placeholder="查找命令、搜索模板" aria-label="查找命令、搜索模板" />
        </CommandSearch>
        <ActionButton><Icon name="cloud" />未同步</ActionButton>
        <ActionButton><Icon name="collab" />协作</ActionButton>
        <ActionButton $end={5}><Icon name="share" />分享</ActionButton>
        <Divider $h={32} $gap={7} />
        <IconButton $w={38} aria-label="更多"><Icon name="more" size={20} /></IconButton>
        <IconButton $w={44} aria-label="收起"><Icon name="up" size={22} /></IconButton>
      </MenuBar>

      <Ribbon>
        <Group $left={12} $right={7}>
          <GroupBody>
            <BigTool $w={62}><Icon name="paste" size={36} /><span>粘贴<Caret /></span></BigTool>
            <Rows>
              <SmallTool><Icon name="cut" />剪切</SmallTool>
              <SmallTool><Icon name="copy" />复制</SmallTool>
            </Rows>
            <BigTool $w={64}><Icon name="brush" size={36} /><span>格式刷</span></BigTool>
          </GroupBody>
          <Corner />
        </Group>

        <Group $plain $left={8} $right={13}>
          <Rows>
            <Row>
              <FontBoxes>
                <SelectBox $w={171}>
                  <select aria-label="字体"><option>Times New Roman</option></select>
                  <Caret />
                </SelectBox>
                <SelectBox $w={98} $split>
                  <select aria-label="字号"><option>五号</option></select>
                  <Caret />
                </SelectBox>
              </FontBoxes>
              <Tools items={[['fontUp'], ['fontDown'], ['eraser'], ['pinyin', 1]]} />
            </Row>
            <Row><Tools items={fontTools} /></Row>
          </Rows>
          <Corner />
        </Group>

        <Group $plain $left={1} $right={8}>
          <Rows>
            <Row><Tools items={listTools} /></Row>
            <Row>
              <Tools items={alignTools} active={align} onPick={setAlign} />
              <Divider $gap={5} />
              <Tools items={[['spacing', 1]]} />
              <Divider $gap={4} />
              <Tools items={[['shading', 1], ['borders', 1]]} />
            </Row>
          </Rows>
          <Corner />
        </Group>

        <Group $left={8} $right={9}>
          <Gallery>
            <StyleCard $on $size={20}><b>AaBbCcDd</b><span>图片</span></StyleCard>
            <StyleCard $title $size={26}><b>AaBbCcDd</b><span>TOC 标题</span></StyleCard>
            <StyleCard $size={22}><b>AaBbCcDd</b><span>论文表...</span></StyleCard>
            <StyleCard $size={20}><b>AaBbCcDd</b><span>图标</span></StyleCard>
            <GalleryScroll>
              <CaretSvg width="8" height="5" viewBox="0 0 8 5"><path d="M0 5h8L4 0z" /></CaretSvg>
              <Caret />
              <CaretSvg width="8" height="9" viewBox="0 0 8 9"><path d="M0 0h8v1H0zM0 4h8L4 9z" /></CaretSvg>
            </GalleryScroll>
          </Gallery>
        </Group>

        <Group $left={13} $right={14}>
          <BigTool $w={84}><Icon name="layout" size={36} /><span>文字排版<Caret /></span></BigTool>
        </Group>

        <Group $left={13} $right={14}>
          <GroupBody>
            <BigTool $w={88}><Icon name="find" size={36} /><span>查找替换<Caret /></span></BigTool>
            <BigTool $w={56}><Icon name="pointer" size={36} /><span>选择<Caret /></span></BigTool>
          </GroupBody>
        </Group>
      </Ribbon>

      <Workspace>
        <Editor>
          <Ruler>
            <RulerScale>
              {rulerNumbers.map((n, i) => <RulerMark key={i}><span>{n}</span></RulerMark>)}
            </RulerScale>
            <IndentMarker $left={119} width="14" height="31" viewBox="0 0 14 31">
              <path d="M2 1h10v3l-5 5-5-5zM2 22v-3l5-5 5 5v3zM2 22h10v8H2zM7 9v5" />
            </IndentMarker>
            <IndentMarker $left={700} width="14" height="24" viewBox="0 0 14 24">
              <path d="M2 22v-3l5-6 5 6v3z" />
            </IndentMarker>
          </Ruler>

          <Viewport>
            <Sheets>
              <Sheet $top={0} $bottom={68}>
                <FieldTable cols={[228, 216, 96, 48]} rows={[['update_time', '回复时间', 'timestamp', '是']]} gap={27} />
                <Margin foot><FooterText>18</FooterText></Margin>
              </Sheet>

              <Sheet $top={57} $bottom={60}>
                <HeaderText>大学本科毕业论文</HeaderText>
                <Margin><HeaderRule /></Margin>
                <FieldTable cols={[228, 216, 96, 48]} rows={[['create_time', '创建时间', 'timestamp', '是']]} />
                <TableTitle>表 4.5  萌宠专区收藏表</TableTitle>
                <FieldTable head cols={[237, 207, 96, 48]} rows={collectRows} />
                <TableTitle>表 4.6  萌宠专区留言表</TableTitle>
                <FieldTable head cols={[189, 255, 96, 48]} rows={messageRows} />
                <SiteStamp>源码久久-code99.top</SiteStamp>
              </Sheet>
            </Sheets>
          </Viewport>
        </Editor>

        <ScrollRail>
          <Svg width="16" height="18" viewBox="0 0 16 18"><path d="M1 1h14v16H1zM4 4v6M8 7v3M12 4v6M4 12h8" /></Svg>
          <ScrollControls />
        </ScrollRail>

        <SideBar>
          <DragHandle />
          {['pen', 'pointer', 'sliders', 'help', 'shop', 'bulb'].map((name) => (
            <SideButton key={name} $soft={name === 'sliders'} aria-label={name}><Icon name={name} /></SideButton>
          ))}
          <hr />
          <SideButton aria-label="更多"><Icon name="dots" /></SideButton>
        </SideBar>
      </Workspace>

      <StatusBar>
        <StatusItem $end={22}>页面: 23/37</StatusItem>
        <StatusItem>字数: 12015</StatusItem>
        <StatusItem $on $end={6}><Icon name="spell" />拼写检查<Caret /></StatusItem>
        <Divider $gap={7} />
        <StatusItem $end={28}><Icon name="proof" />文档校对</StatusItem>
        <StatusItem $end={26}>兼容模式</StatusItem>
        <StatusItem><Icon name="missing" />缺失字体</StatusItem>
        <StatusRight>
          <IconButton $w={54} aria-label="护眼模式"><Icon name="eye" /></IconButton>
          <Divider $gap={5} />
          <IconButton $on aria-label="页面视图"><Icon name="pageView" /></IconButton>
          <IconButton $w={41} aria-label="大纲"><Icon name="outline" /></IconButton>
          <IconButton aria-label="阅读版式"><Icon name="book" /></IconButton>
          <IconButton $w={41} aria-label="Web 版式"><Icon name="globe" /></IconButton>
          <IconButton $w={41} aria-label="写作模式"><Icon name="edit" /></IconButton>
          <Divider $gap={7} />
          <IconButton $w={44} aria-label="最佳显示比例"><Icon name="fit" size={23} /></IconButton>
          <StatusItem $end={18}>70%<Caret /></StatusItem>
          <IconButton $w={24} aria-label="缩小"><Icon name="minus" size={18} /></IconButton>
          <ZoomSlider type="range" aria-label="缩放" min="0" max="100" value={zoom} onChange={(e) => setZoom(e.target.value)} />
          <IconButton $w={24} aria-label="放大"><Icon name="plus" size={18} /></IconButton>
          <IconButton $w={49} aria-label="全屏"><Icon name="full" /></IconButton>
        </StatusRight>
      </StatusBar>

      <TaskBar>
        <TaskButton $w={72} aria-label="开始菜单"><WindowsLogo /></TaskButton>
        <TaskButton $w={78} aria-label="应用中心"><PinwheelLogo /></TaskButton>
        <TaskSearch onSubmit={(e) => e.preventDefault()}>
          <label>
            <IeLogo size={24} color="#3a8fe0" ring="#5bb0f0" />
            <CaretSvg width="7" height="5" viewBox="0 0 8 5"><path d="M0 5h8L4 0z" /></CaretSvg>
            <input type="text" aria-label="搜索" defaultValue="陈乔恩祭拜乔任梁" />
          </label>
          <button type="submit">搜索一下</button>
        </TaskSearch>
        <Grip />
        <TaskButton aria-label="Internet Explorer"><AppMark><IeLogo /></AppMark></TaskButton>
        <TaskButton aria-label="浏览器"><AppMark><GreenLogo /></AppMark></TaskButton>
        <TaskButton aria-label="文件资源管理器"><AppMark $open><FolderLogo /></AppMark></TaskButton>
        <TaskButton aria-label="录屏"><AppMark $open><NinjaLogo /></AppMark></TaskButton>
        <TaskButton $active aria-label="WPS"><AppMark $open $full><WpsLogo /></AppMark></TaskButton>

        <Weather>
          <WeatherLogo />
          <WeatherText>
            <strong>29°C 多云</strong>
            <span>50%<br />内存占用</span>
          </WeatherText>
        </Weather>
        {trayIcons.map(([label, icon]) => (
          <TaskButton key={label} $w={36} aria-label={label}>{icon}</TaskButton>
        ))}
        <TaskButton $w={36}>中</TaskButton>
        <TaskButton $w={48} aria-label="输入法">
          <svg width="24" height="24" viewBox="0 0 24 24">
            <rect width="24" height="24" rx="3" fill="#3d8df0" />
            <circle cx="12" cy="11" r="6" fill="none" stroke="#fff" strokeWidth="2.500" />
            <path d="M14 14l5 5" stroke="#fff" strokeWidth="2.500" />
          </svg>
        </TaskButton>
        <Clock>10:32 周日<br />2022/9/18</Clock>
        <TaskButton $w={52} aria-label="通知">
          <svg width="36" height="32" viewBox="0 0 36 32">
            <path d="M0 0h24v21H12l-5 5v-5H0z" fill="#fff" />
            <path d="M9 5l7 5-7 6z" fill="#1f1f1f" />
            <path d="M15 12h21v20H15z" fill="#e00b0b" />
            <text x="22" y="27" fontSize="13" fill="#fff">2</text>
          </svg>
        </TaskButton>
        <ShowDesktop aria-label="显示桌面" />
      </TaskBar>

      <Watermark aria-hidden="true">
        {Array.from({ length: 8 }, (_, row) => (
          <WatermarkRow key={row} $shift={row % 2 === 1}>
            {Array.from({ length: 8 }, (_, i) => <span key={i}>code51.cn</span>)}
          </WatermarkRow>
        ))}
      </Watermark>
      <LevelMeter />
      <SystemGadget><i /></SystemGadget>
      <Cursor width="13" height="19" viewBox="0 0 13 19">
        <path d="M1 1v15l4-3 2 5 3-1-2-5h4z" fill="#fff" stroke="#000" strokeWidth="1.300" />
      </Cursor>
    </Window>
  );
};

export default App;
